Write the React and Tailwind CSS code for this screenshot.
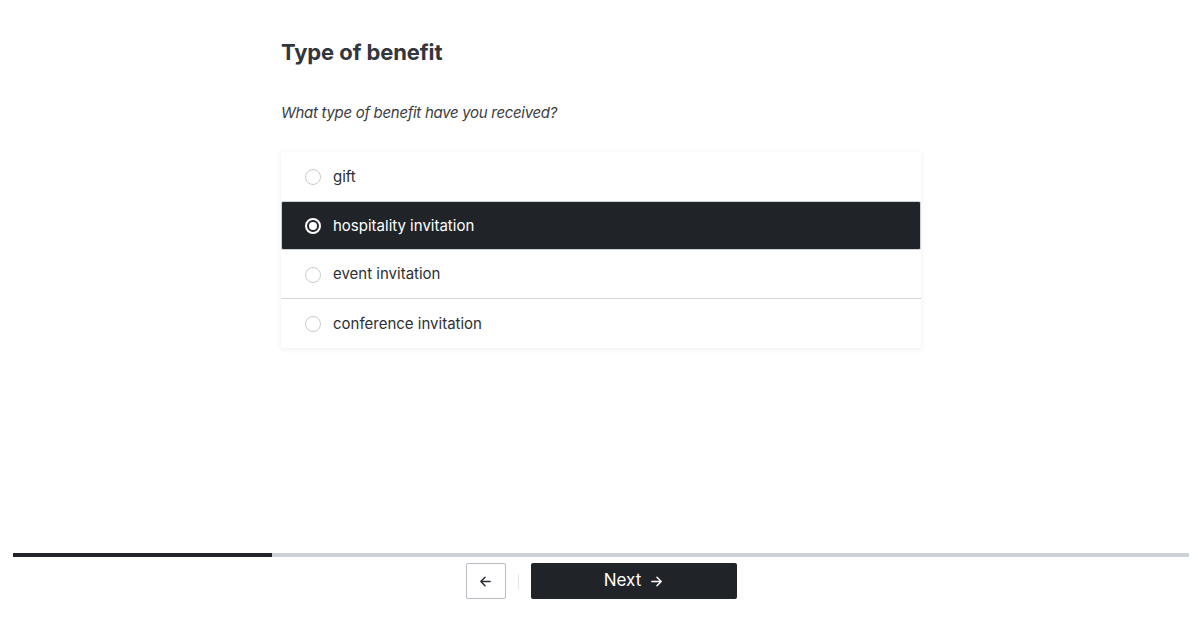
import React, { useState } from 'react';

const OPTIONS = ['gift', 'hospitality invitation', 'event invitation', 'conference invitation'];

function Radio({ checked }) {
  return checked ? (
    <span className="w-4 h-4 rounded-full border-2 border-white flex items-center justify-center flex-shrink-0">
      <span className="w-2 h-2 rounded-full bg-white"></span>
    </span>
  ) : (
    <span className="w-4 h-4 rounded-full border border-[#c9ccd1] bg-white flex-shrink-0"></span>
  );
}

export default function App() {
  const [selected, setSelected] = useState(1);

  return (
    <div className="h-[618px] w-full bg-white flex flex-col text-[#2c2f35]" style={{ fontFamily: 'Inter, "Noto Sans", sans-serif' }}>
      <div className="flex-1 flex justify-center">
        <div className="w-[640px] pt-[38px]">
          <h1 className="text-[22px] leading-[28px] font-bold text-[#33363c] tracking-[-0.1px]">Type of benefit</h1>
          <p className="mt-[37px] text-[15px] leading-[20px] italic text-[#3a3d43] tracking-[-0.3px]">What type of benefit have you received?</p>

          {/* Options */}
          <div className="mt-[29px] bg-white shadow-[0_1px_6px_rgba(0,0,0,0.07)] rounded-[2px]">
            {OPTIONS.map((opt, idx) => {
              const isSel = selected === idx;
              const showLine = idx === 2;
              return (
                <button
                  key={opt}
                  type="button"
                  onClick={() => setSelected(idx)}
                  className={`w-full h-[49px] flex items-center gap-[12px] pt-[1px] text-left text-[15px] ${
                    isSel
                      ? 'bg-[#202328] text-white border border-[#cdd1d8] rounded-[2px] pl-[23px]'
                      : 'text-[#2c2f35] pl-[24px]'
                  } ${showLine ? 'border-b border-[#d3d5d9]' : ''}`}
                >
                  <Radio checked={isSel} />
                  <span>{opt}</span>
                </button>
              );
            })}
          </div>
        </div>
      </div>

      {/* Footer */}
      <div className="px-[13px]">
        <div className="h-[4px] bg-[#cdd1d8] flex">
          <div className="w-[259px] bg-[#202328]"></div>
        </div>
      </div>
      <div className="flex items-center justify-center pt-[6px] pb-[19px]">
        <button type="button" className="w-[40px] h-[36px] border border-[#b9bcc2] rounded-[2px] flex items-center justify-center text-[#2c2f35]">
          <svg width="13" height="13" viewBox="0 0 14 14" fill="none" stroke="currentColor" strokeWidth="1.6" strokeLinecap="round" strokeLinejoin="round">
            <path d="M12 7H2M6.5 2.5L2 7l4.5 4.5" />
          </svg>
        </button>
        <div className="w-px h-[15px] bg-[#e3e5e8] mx-[12px]"></div>
        <button type="button" className="w-[206px] h-[36px] bg-[#202328] text-white rounded-[2px] flex items-center justify-center gap-[9px] text-[17px]">
          <span>Next</span>
          <svg width="13" height="13" viewBox="0 0 14 14" fill="none" stroke="currentColor" strokeWidth="1.6" strokeLinecap="round" strokeLinejoin="round">
            <path d="M2 7h10M7.5 2.5L12 7l-4.5 4.5" />
          </svg>
        </button>
      </div>
    </div>
  );
}
